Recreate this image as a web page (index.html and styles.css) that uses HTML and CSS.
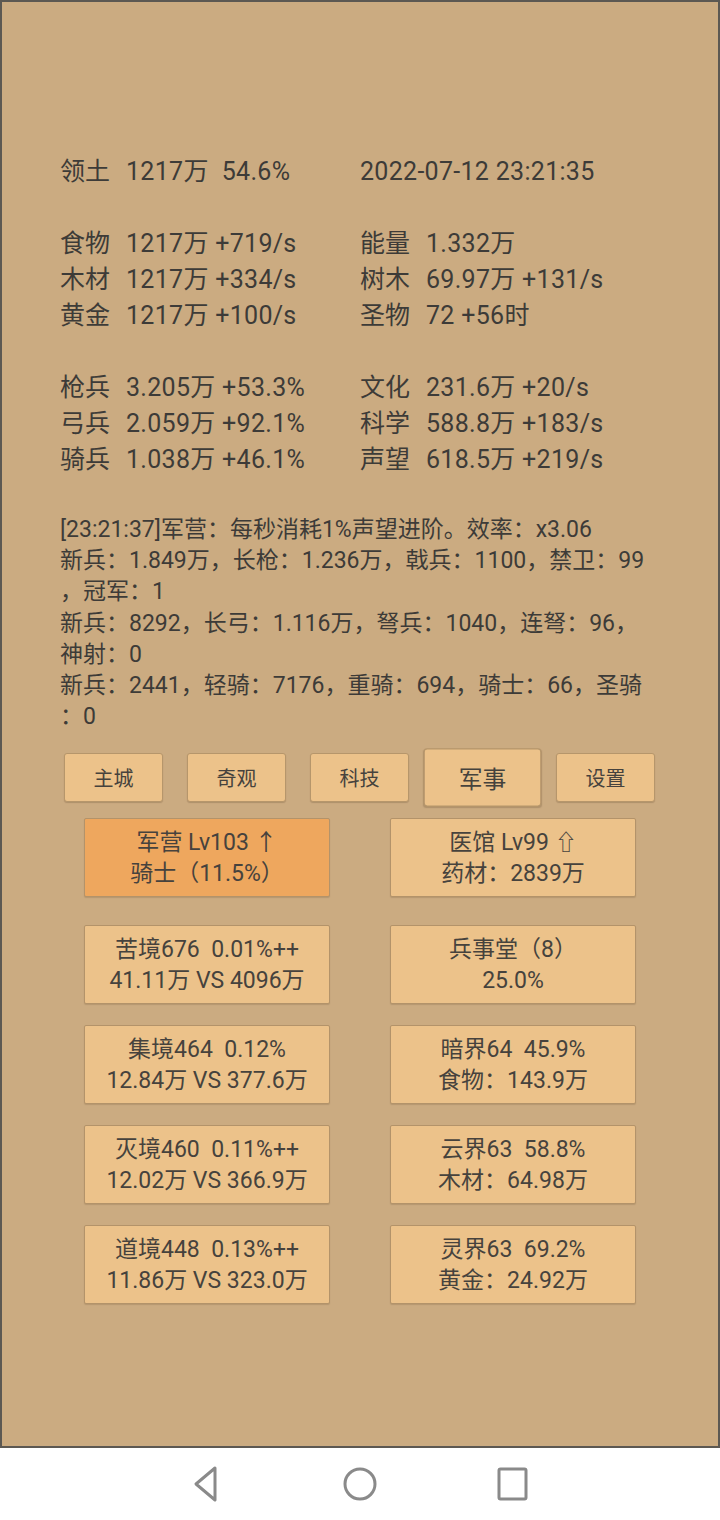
FILE: index.html
```html
<!DOCTYPE html>
<html lang="zh-CN">
<head>
  <meta charset="UTF-8" />
  <title>领土</title>
  <link rel="stylesheet" href="styles.css">
</head>
<body>
  <div class="screen">
    <div class="stats">
      <div class="group">
        <div class="cell"><span class="label">领土</span>1217万  54.6%</div>
        <div class="cell">2022-07-12 23:21:35</div>
      </div>
      <div class="group">
        <div class="cell"><span class="label">食物</span>1217万 +719/s</div>
        <div class="cell"><span class="label">能量</span>1.332万</div>
        <div class="cell"><span class="label">木材</span>1217万 +334/s</div>
        <div class="cell"><span class="label">树木</span>69.97万 +131/s</div>
        <div class="cell"><span class="label">黄金</span>1217万 +100/s</div>
        <div class="cell"><span class="label">圣物</span>72 +56时</div>
      </div>
      <div class="group">
        <div class="cell"><span class="label">枪兵</span>3.205万 +53.3%</div>
        <div class="cell"><span class="label">文化</span>231.6万 +20/s</div>
        <div class="cell"><span class="label">弓兵</span>2.059万 +92.1%</div>
        <div class="cell"><span class="label">科学</span>588.8万 +183/s</div>
        <div class="cell"><span class="label">骑兵</span>1.038万 +46.1%</div>
        <div class="cell"><span class="label">声望</span>618.5万 +219/s</div>
      </div>
    </div>

    <div class="log">
      <div>[23:21:37]军营：每秒消耗1%声望进阶。效率：x3.06</div>
      <div>新兵：1.849万，长枪：1.236万，戟兵：1100，禁卫：99</div>
      <div>，冠军：1</div>
      <div>新兵：8292，长弓：1.116万，弩兵：1040，连弩：96，</div>
      <div>神射：0</div>
      <div>新兵：2441，轻骑：7176，重骑：694，骑士：66，圣骑</div>
      <div>：0</div>
    </div>

    <div class="tabs">
      <div class="tab">主城</div>
      <div class="tab">奇观</div>
      <div class="tab">科技</div>
      <div class="tab active">军事</div>
      <div class="tab">设置</div>
    </div>

    <div class="cards first">
      <div class="card hot">军营 Lv103 ↑<br>骑士（11.5%）</div>
      <div class="card">医馆 Lv99 <span class="up">⇧</span><br>药材：2839万</div>
    </div>
    <div class="cards">
      <div class="card">苦境676  0.01%++<br>41.11万 VS 4096万</div>
      <div class="card">兵事堂（8）<br>25.0%</div>
      <div class="card">集境464  0.12%<br>12.84万 VS 377.6万</div>
      <div class="card">暗界64  45.9%<br>食物：143.9万</div>
      <div class="card">灭境460  0.11%++<br>12.02万 VS 366.9万</div>
      <div class="card">云界63  58.8%<br>木材：64.98万</div>
      <div class="card">道境448  0.13%++<br>11.86万 VS 323.0万</div>
      <div class="card">灵界63  69.2%<br>黄金：24.92万</div>
    </div>
  </div>

  <div class="navbar">
    <svg width="40" height="40" viewBox="0 0 40 40">
      <path d="M27 4 L8 20 L27 36 Z" fill="none" stroke="#8a8a8a" stroke-width="3" stroke-linejoin="round"/>
    </svg>
    <svg width="40" height="40" viewBox="0 0 40 40">
      <circle cx="20" cy="20" r="15" fill="none" stroke="#8a8a8a" stroke-width="3"/>
    </svg>
    <svg width="40" height="40" viewBox="0 0 40 40">
      <rect x="7" y="5" width="27" height="30" rx="1.5" fill="none" stroke="#8a8a8a" stroke-width="3"/>
    </svg>
  </div>
</body>
</html>
```

FILE: styles.css
```css
body {
  margin: 0;
  font-family: Roboto, "Noto Sans CJK SC", sans-serif;
  color: #3d3b38;
  background: #fff;
}
.screen {
  box-sizing: border-box;
  height: 1448px;
  border: 2px solid #5c5852;
  background: #cbab81;
  padding: 152px 0 0 58px;
}
.stats {
  display: flex;
  flex-direction: column;
  gap: 36px;
  font-size: 25px;
  line-height: 36px;
  letter-spacing: 0.3px;
}
.group {
  display: grid;
  grid-template-columns: 300px 300px;
}
.cell {
  white-space: pre;
}
.label {
  margin-right: 16px;
  letter-spacing: 0;
}
.log {
  margin-top: 36px;
  font-size: 23px;
  line-height: 31.2px;
}
.log div {
  white-space: pre;
}
.tabs {
  display: flex;
  gap: 24px;
  margin: 21px 0 0 4px;
}
.tab {
  box-sizing: border-box;
  width: 99px;
  height: 49px;
  display: flex;
  align-items: center;
  justify-content: center;
  background: #ecc28a;
  border: 1px solid #b6966b;
  border-radius: 3px;
  box-shadow: 0 1px 1px rgba(60, 40, 20, 0.2);
  font-size: 20px;
  color: #46423d;
}
.tab.active {
  transform: scale(1.19);
}
.cards {
  display: grid;
  grid-template-columns: 246px 246px;
  column-gap: 60px;
  row-gap: 21px;
  margin-left: 24px;
}
.cards.first {
  margin: 16px 0 28px 24px;
}
.card {
  box-sizing: border-box;
  height: 79px;
  padding: 8px 0 7px;
  background: #ecc28a;
  border: 1px solid #b3936a;
  border-radius: 2px;
  box-shadow: 0 1px 1px rgba(60, 40, 20, 0.15);
  text-align: center;
  font-size: 23px;
  line-height: 31px;
  white-space: pre;
  color: #46423d;
}
.card.hot {
  background: #eea75e;
}
.up {
  font-family: "DejaVu Sans", sans-serif;
  font-size: 22px;
  font-weight: 300;
}
.navbar {
  height: 72px;
  display: flex;
  align-items: center;
  justify-content: center;
  gap: 112px;
}
```
